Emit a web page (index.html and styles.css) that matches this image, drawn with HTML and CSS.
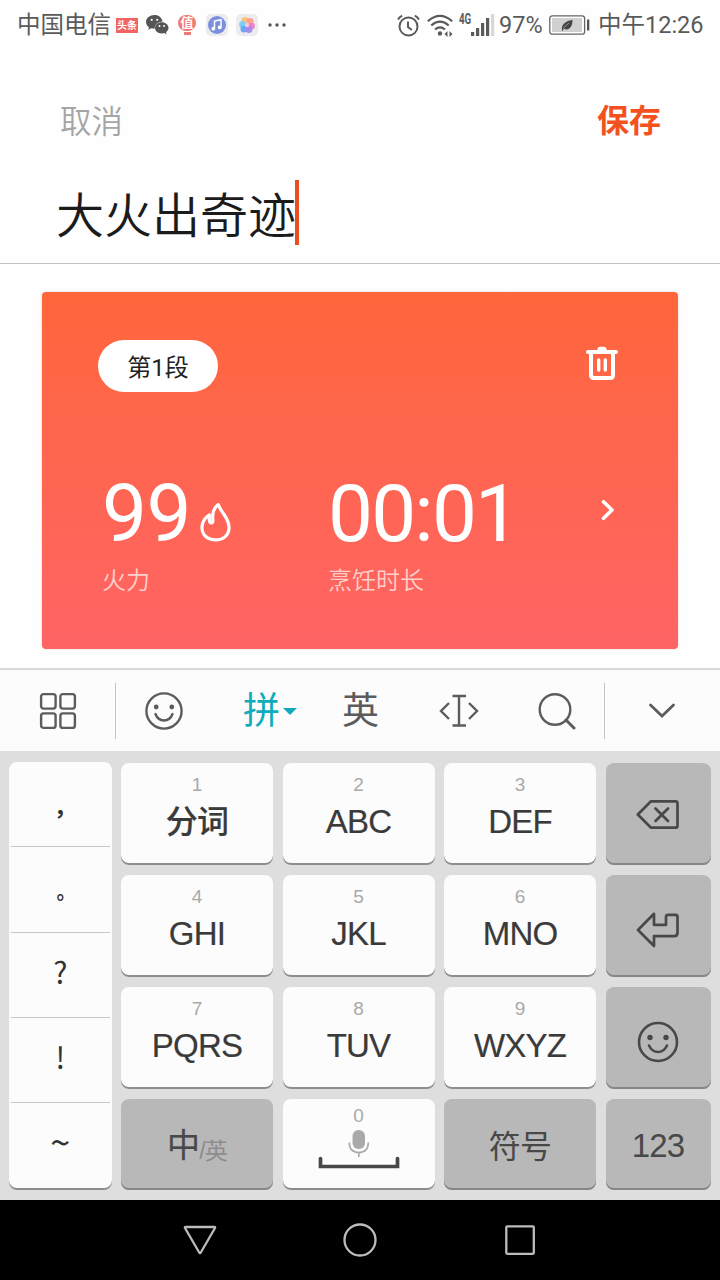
FILE: index.html
```html
<!DOCTYPE html>
<html lang="zh-CN">
  <head>
    <meta charset="utf-8">
    <title>大火出奇迹</title>
    <link rel="stylesheet" href="styles.css">
  </head>
  <body>
    <div class="status-bar">
      <span class="carrier">中国电信</span>
      <span class="toutiao">头条</span>
      <svg class="wechat" width="23" height="20" viewBox="0 0 23 20">
        <path fill="#555" d="M8.500 0C3.800 0 0 3 0 6.900c0 2.200 1.200 4 3 5.300L2.200 14.800l3-1.600c1 .3 2.100.5 3.400.5 0-4.300 3.600-7.200 8-7.200C15.900 2.700 12.600 0 8.500 0z" />
        <path fill="#555" d="M15.700 7.200c-3.900 0-6.700 2.500-6.700 5.600s2.800 5.700 6.700 5.700c.9 0 1.700-.1 2.500-.4l2.500 1.300-.7-2.200c1.500-1.100 2.500-2.600 2.500-4.400 0-3.100-2.900-5.600-6.800-5.600z" />
        <g fill="#fff">
          <circle cx="5.700" cy="4.800" r="1.100" />
          <circle cx="11.200" cy="4.800" r="1.100" />
          <circle cx="13.500" cy="11" r="1" />
          <circle cx="18" cy="11" r="1" />
        </g>
      </svg>
      <span class="smzdm"><b>值</b><i></i></span>
      <span class="app-icon">
        <svg width="18" height="18" viewBox="0 0 18 18">
          <circle cx="9" cy="9" r="9" fill="#7b8fdc" />
          <path d="M6.500 12.500V5l6.500-1.300v7.500" fill="none" stroke="#fff" stroke-width="1.500" />
          <circle cx="5.300" cy="12.700" r="1.900" fill="#fff" />
          <circle cx="11.700" cy="11.400" r="1.900" fill="#fff" />
        </svg>
      </span>
      <span class="app-icon photos">
        <svg width="16" height="16" viewBox="0 0 16 16">
          <circle cx="6" cy="3.800" r="3.700" fill="#ffc07a" />
          <circle cx="11" cy="4.500" r="3.600" fill="#ffa58c" />
          <circle cx="3.600" cy="7.500" r="3.400" fill="#7fcdf5" />
          <circle cx="12.600" cy="9" r="3.300" fill="#f17fc4" />
          <circle cx="5" cy="12" r="3.500" fill="#6aa7f5" />
          <circle cx="10" cy="12.500" r="3.400" fill="#a98af0" />
          <circle cx="8" cy="8" r="2.200" fill="#f4c9d8" />
        </svg>
      </span>
      <svg class="dots" width="18" height="4" viewBox="0 0 18 4">
        <g fill="#555">
          <circle cx="2" cy="2" r="1.700" />
          <circle cx="9" cy="2" r="1.700" />
          <circle cx="16" cy="2" r="1.700" />
        </g>
      </svg>

      <svg class="alarm" width="23" height="23" viewBox="0 0 23 23">
        <g fill="none" stroke="#5a5a5a" stroke-width="2">
          <circle cx="11.500" cy="12.500" r="9" />
          <path d="M11 7.500v5.500l3.800 3" />
          <path d="M1 5.500Q2.500 2.800 5.200 1.600M22 5.500Q20.500 2.800 17.800 1.600" />
        </g>
      </svg>
      <svg class="wifi" width="26" height="23" viewBox="0 0 26 23">
        <g fill="none" stroke="#5a5a5a" stroke-width="2.200">
          <path d="M.8 7.200Q13-3.600 25.200 7.200" />
          <path d="M4.300 11.500Q13 3.900 21.700 11.500" />
          <path d="M8 15.500Q13 11.400 18 15.500" />
        </g>
        <circle cx="13" cy="19.500" r="2.200" fill="#5a5a5a" />
        <path d="M20.500 17v6l-3-3zM22.500 17v6l3-3z" fill="#5a5a5a" />
      </svg>
      <span class="network">4G</span>
      <svg class="signal" width="24" height="22" viewBox="0 0 24 22">
        <g fill="#5a5a5a">
          <rect x="0" y="18" width="3.200" height="4" />
          <rect x="5" y="14" width="3.200" height="8" />
          <rect x="10" y="9" width="3.200" height="13" />
          <rect x="15" y="4" width="3.200" height="18" />
        </g>
        <rect x="20" y="0" width="3.200" height="22" fill="#d8d8d8" />
      </svg>
      <span class="percent">97%</span>
      <svg class="battery" width="41" height="20" viewBox="0 0 41 20">
        <rect x=".8" y=".8" width="34.800" height="18.400" rx="2.500" fill="#fff" stroke="#666" stroke-width="1.300" />
        <rect x="3" y="3" width="30" height="14" fill="#d0d0d0" />
        <path d="M13 15.500c-1-5 2.500-9.500 10.500-10.500.3 7-4 11-8.500 8.800L13.600 16z" fill="#444" />
        <path d="M14 14.500Q16 10.500 20 8" fill="none" stroke="#aaa" stroke-width=".8" />
        <rect x="38" y="4.500" width="2.300" height="11" fill="#555" />
      </svg>
      <span class="clock">中午12:26</span>
    </div>

    <div class="header">
      <span class="cancel">取消</span>
      <span class="save">保存</span>
    </div>
    <div class="name-field">
      <span class="name">大火出奇迹</span>
      <span class="caret"></span>
    </div>

    <div class="content">
      <div class="card">
        <div class="card-top">
          <span class="stage">第1段</span>
          <svg width="34" height="36" viewBox="0 0 34 36">
            <g fill="none" stroke="#fff" stroke-linecap="round">
              <path d="M3 7h28" stroke-width="4" />
              <path d="M14 5.200q0-1.700 1.700-1.700h2.600q1.700 0 1.700 1.700" stroke-width="3.500" />
              <path d="M6 8v22q0 3 3 3h16q3 0 3-3V8" stroke-width="4" />
              <path d="M13.700 15v10M20.300 15v10" stroke-width="3.400" />
            </g>
          </svg>
        </div>
        <div class="card-values">
          <div class="fire">
            <div class="value">
              99
              <svg width="31" height="40" viewBox="0 0 32 41">
                <path d="M18.800 2.500C14.200 6 12.500 11 13.200 17.500q.5 4-1.700 4-2.500 0-1.800-8.500C4.800 16.500 2 21 2 26.300 2 34 8 39 16 39s14-5 14-12.500c0-5.800-2.300-9.500-5-13.500-2.600-3.800-4.800-6.500-6.200-10.500z" fill="none" stroke="#fff" stroke-width="3.300" stroke-linejoin="round" />
              </svg>
            </div>
            <div class="label">火力</div>
          </div>
          <div class="duration">
            <div class="value">00:01</div>
            <div class="label">烹饪时长</div>
          </div>
          <svg class="arrow" width="14" height="22" viewBox="0 0 14 22">
            <path d="M2.500 2.700l8.500 8.300-8.500 8.300" fill="none" stroke="#fff" stroke-width="3.600" stroke-linecap="round" stroke-linejoin="round" />
          </svg>
        </div>
      </div>
    </div>

    <div class="toolbar">
      <div class="tool tool-menu">
        <svg width="38" height="38" viewBox="0 0 38 38">
          <g fill="none" stroke="#5c5c5c" stroke-width="2.400">
            <rect x="2.100" y="2.100" width="14.500" height="14.500" rx="2.500" />
            <rect x="21.400" y="2.100" width="14.500" height="14.500" rx="2.500" />
            <rect x="2.100" y="21.400" width="14.500" height="14.500" rx="2.500" />
            <rect x="21.400" y="21.400" width="14.500" height="14.500" rx="2.500" />
          </g>
        </svg>
      </div>
      <div class="tool tool-middle">
        <svg width="38" height="38" viewBox="0 0 38 38">
          <circle cx="19" cy="19" r="17.600" fill="none" stroke="#5c5c5c" stroke-width="2.400" />
          <circle cx="11.200" cy="15" r="2.400" fill="#5c5c5c" />
          <circle cx="26.800" cy="15" r="2.400" fill="#5c5c5c" />
          <path d="M10.500 22q2.500 6.500 8.500 6.500t8.500-6.500" fill="none" stroke="#5c5c5c" stroke-width="2.400" stroke-linecap="round" />
        </svg>
        <span class="pinyin">拼<i></i></span>
        <span class="english">英</span>
        <svg class="cursor" width="40" height="34" viewBox="0 0 40 34">
          <g fill="none" stroke="#5c5c5c" stroke-width="2.400">
            <path d="M13.500 2h13.500M13.500 31.500h13.500M20 2v29.500" />
            <path d="M10 9l-8 8 8 8M30 9l8 8-8 8" />
          </g>
        </svg>
        <svg class="search" width="38" height="38" viewBox="0 0 38 38">
          <circle cx="17" cy="17.500" r="15.300" fill="none" stroke="#5c5c5c" stroke-width="2.400" />
          <path d="M28 28l8 8" stroke="#5c5c5c" stroke-width="3" stroke-linecap="round" />
        </svg>
      </div>
      <div class="tool tool-hide">
        <svg width="28" height="18" viewBox="0 0 28 18">
          <path d="M2.500 3l11.500 11 11.500-11" fill="none" stroke="#5c5c5c" stroke-width="2.800" stroke-linecap="round" />
        </svg>
      </div>
    </div>

    <div class="keyboard">
      <div class="punctuation" lang="zh-TW">
        <span class="comma">，</span>
        <span class="stop">。</span>
        <span>?</span>
        <span>!</span>
        <span class="tilde">~</span>
      </div>
      <div class="key"><small>1</small><b>分词</b></div>
      <div class="key"><small>2</small>ABC</div>
      <div class="key"><small>3</small>DEF</div>
      <div class="key dark">
        <svg width="44" height="32" viewBox="0 0 44 32">
          <g fill="none" stroke="#484848" stroke-width="2.700" stroke-linejoin="round" stroke-linecap="round">
            <path d="M15 2.300h24.500q2 0 2 2v22.400q0 2-2 2H15L1.800 15.500z" />
            <path d="M19.500 9.500l12.500 12.500M32 9.500L19.500 22" />
          </g>
        </svg>
      </div>
      <div class="key"><small>4</small>GHI</div>
      <div class="key"><small>5</small>JKL</div>
      <div class="key"><small>6</small>MNO</div>
      <div class="key dark enter">
        <svg width="44" height="36" viewBox="0 0 44 36">
          <path d="M18 1.800L2 18l16 16v-9.800h20q3.500 0 3.500-3.500V4.800q0-2-2-2H32q-2 0-2 2v8H18z" fill="none" stroke="#484848" stroke-width="2.700" stroke-linejoin="round" />
        </svg>
      </div>
      <div class="key"><small>7</small>PQRS</div>
      <div class="key"><small>8</small>TUV</div>
      <div class="key"><small>9</small>WXYZ</div>
      <div class="key dark smile">
        <svg width="42" height="42" viewBox="0 0 42 42">
          <circle cx="21" cy="21" r="19" fill="none" stroke="#484848" stroke-width="2.600" />
          <circle cx="13" cy="16.500" r="2.700" fill="#484848" />
          <circle cx="29" cy="16.500" r="2.700" fill="#484848" />
          <path d="M12 24.500q3 6.500 9 6.500t9-6.500" fill="none" stroke="#484848" stroke-width="2.600" stroke-linecap="round" />
        </svg>
      </div>
      <div class="key dark language"><span>中</span><em>/英</em></div>
      <div class="key space">
        <small>0</small>
        <svg width="82" height="42" viewBox="0 0 82 42">
          <rect x="34.500" y="0" width="12.500" height="19" rx="6" fill="#a9a9a9" />
          <path d="M31.300 12.500q0 10 9.500 10t9.500-10M40.800 22.500V27" fill="none" stroke="#a9a9a9" stroke-width="1.600" />
          <path d="M2.500 28.500v8h77v-8" fill="none" stroke="#484848" stroke-width="3.700" stroke-linecap="round" />
        </svg>
      </div>
      <div class="key dark symbols">符号</div>
      <div class="key dark numbers">123</div>
    </div>

    <div class="nav-bar">
      <svg width="36" height="36" viewBox="0 0 36 36">
        <path d="M3.500 5h29q1 0 .5 1L18.800 30.500q-.8 1.200-1.600 0L3 6q-.5-1 .5-1z" fill="none" stroke="#bcbcbc" stroke-width="2.300" />
      </svg>
      <svg width="36" height="36" viewBox="0 0 36 36">
        <circle cx="18" cy="18" r="15.500" fill="none" stroke="#bcbcbc" stroke-width="2.300" />
      </svg>
      <svg width="36" height="36" viewBox="0 0 36 36">
        <rect x="4.300" y="4.300" width="27.500" height="27.500" rx="1" fill="none" stroke="#bcbcbc" stroke-width="2.300" />
      </svg>
    </div>
  </body>
</html>
```

FILE: styles.css
```css
* {
  box-sizing: border-box;
}

body {
  width: 720px;
  height: 1280px;
  margin: 0;
  background-color: #fefefe;
  font-family: Roboto, "Noto Sans CJK SC", sans-serif;
  display: flex;
  flex-direction: column;
  overflow: hidden;
}

svg {
  display: block;
  flex: none;
}

/* Status bar */
.status-bar {
  height: 50px;
  padding: 0 15px 0 17px;
  display: flex;
  align-items: center;
  color: #5a5a5a;
  font-size: 23.5px;
  line-height: 52px;
  white-space: nowrap;
}

.carrier {
  width: 99px;
}

.toutiao {
  width: 22px;
  height: 15px;
  margin-right: 8px;
  background-color: #f26464;
  color: #fff;
  font-size: 10px;
  font-weight: bold;
  line-height: 15px;
  text-align: center;
}

.smzdm {
  width: 18px;
  height: 20px;
  margin: 0 10px 0 9px;
  color: #fff;
  font-size: 13px;
  line-height: 16px;
  text-align: center;
}

.smzdm b {
  display: block;
  height: 16px;
  border-radius: 8px;
  background-color: #ee7b75;
}

.smzdm i {
  display: block;
  width: 7px;
  height: 3px;
  margin: 1px auto 0;
  background-color: #ee7b75;
}

.app-icon {
  width: 22px;
  height: 22px;
  margin-right: 8px;
  border-radius: 5px;
  background-color: #ececee;
  display: flex;
  align-items: center;
  justify-content: center;
}

.photos {
  margin-right: 10px;
}

.alarm {
  margin-left: auto;
  margin-right: 7px;
}

.wifi {
  margin-right: 6px;
}

.network {
  width: 12px;
  height: 28px;
  font-size: 14px;
  font-weight: bold;
  line-height: 16px;
  transform: scaleX(0.7);
  transform-origin: left;
}

.signal {
  margin-right: 4px;
}

.percent {
  width: 50px;
}

.battery {
  margin-right: 8px;
}

.clock {
  width: 107px;
}

/* Recipe name */
.header {
  height: 130px;
  padding: 48px 59px 0 60px;
  display: flex;
  justify-content: space-between;
  font-size: 32px;
  line-height: 46px;
}

.cancel {
  padding-top: 2px;
  color: #a5a5a5;
  font-size: 31.5px;
  font-weight: 350;
}

.save {
  color: #f4511e;
  font-weight: bold;
}

.name-field {
  height: 84px;
  padding-left: 56px;
  border-bottom: 1px solid #c2c2c2;
  display: flex;
}

.name {
  width: 239px;
  color: #1b1b1b;
  font-size: 48px;
  font-weight: 350;
  line-height: 73px;
  white-space: nowrap;
}

.caret {
  width: 4px;
  height: 65px;
  background-color: #ea4e20;
}

/* Cooking stage card */
.content {
  height: 404px;
  padding: 28px 42px 0;
}

.card {
  height: 357px;
  padding: 48px 60px 0 56px;
  border-radius: 4px;
  background-image: linear-gradient(#ff663c, #ff6465);
  box-shadow: 0 0 3px rgba(0, 0, 0, 0.15);
  color: #fff;
}

.card-top {
  height: 136px;
  display: flex;
  justify-content: space-between;
}

.card-top svg {
  margin-top: 5px;
  margin-right: -1px;
}

.stage {
  width: 120px;
  height: 52px;
  border-radius: 26px;
  background-color: #fff;
  color: #222;
  font-size: 24px;
  line-height: 56px;
  text-align: center;
}

.card-values {
  display: flex;
}

.fire {
  width: 226px;
  padding-left: 4px;
}

.value {
  height: 89px;
  display: flex;
  font-size: 80px;
  letter-spacing: -0.5px;
  line-height: 76px;
}

.duration .value {
  letter-spacing: -1.8px;
}

.fire svg {
  margin: 26px 0 0 9px;
}

.label {
  color: #ffd0cb;
  font-size: 24px;
  font-weight: 350;
  line-height: 33px;
}

.duration {
  width: 276px;
  padding-left: 4px;
}

.arrow {
  margin-top: 23px;
  margin-left: 1px;
}

/* Keyboard toolbar */
.toolbar {
  height: 83px;
  border-top: 2px solid #d9d9d9;
  background-color: #fcfcfc;
  display: flex;
  align-items: center;
}

.tool {
  height: 56px;
  display: flex;
  align-items: center;
}

.tool-menu {
  width: 116px;
  padding-left: 39px;
  border-right: 1px solid #c4c4c4;
}

.tool-middle {
  width: 489px;
  padding-left: 29px;
  border-right: 1px solid #c4c4c4;
}

.tool-hide {
  padding-left: 43px;
}

.pinyin,
.english {
  color: #5c5c5c;
  font-size: 37px;
  line-height: 56px;
  padding-top: 2px;
}

.pinyin {
  width: 53px;
  margin-left: 60px;
  color: #10abbd;
  display: flex;
  align-items: center;
}

.pinyin i {
  margin-left: 3px;
  border: 7px solid transparent;
  border-top: 7px solid #10abbd;
  border-bottom: 0;
}

.english {
  width: 37px;
  margin-left: 46px;
}

.cursor {
  margin-left: 60px;
}

.search {
  margin-left: 59px;
}

/* Keyboard */
.keyboard {
  height: 449px;
  padding: 12px 9px 10px;
  background-color: #dedede;
  display: grid;
  grid-template-columns: 102.5px 152px 152px 152px 105px;
  grid-template-rows: 102px 102px 102px 91px;
  gap: 10px 9.5px;
}

.punctuation {
  grid-row: span 4;
  height: 428px;
  margin-top: -1px;
  padding: 0 2px;
  border-radius: 8px;
  background-color: #fcfcfc;
  box-shadow: inset 0 -2px #8d8d8d;
  color: #333;
  font-family: "Noto Sans CJK TC", sans-serif;
  font-size: 30px;
  text-align: center;
}

.punctuation span {
  display: block;
  height: 85.3px;
  border-bottom: 1px solid #c8c8c8;
  line-height: 77px;
}

.punctuation span:last-child {
  border-bottom: none;
}

.punctuation .comma {
  font-size: 23px;
  font-weight: bold;
  line-height: 101px;
}

.punctuation .stop {
  font-size: 19px;
  font-weight: bold;
  line-height: 100px;
}

.punctuation .tilde {
  font-size: 36px;
  line-height: 75px;
}

.key {
  border-radius: 8px;
  background-color: #fcfcfc;
  box-shadow: inset 0 -2px #8d8d8d;
  color: #3a3a3a;
  font-family: "Liberation Sans", "Noto Sans CJK SC", sans-serif;
  font-size: 33px;
  letter-spacing: -0.8px;
  line-height: 48px;
  text-align: center;
  -webkit-text-stroke: 0.2px;
}

.key small {
  display: block;
  height: 35px;
  color: #a9a9a9;
  font-size: 19px;
  letter-spacing: 0;
  line-height: 43px;
  -webkit-text-stroke: 0;
}

.key b {
  font-size: 32px;
  font-weight: 500;
}

.dark {
  background-color: #b8b8b8;
  box-shadow: inset 0 -2px #868686;
  color: #484848;
  display: flex;
  align-items: center;
  justify-content: center;
}

.dark svg {
  margin-top: 2px;
}

.enter svg,
.smile svg {
  margin-top: 8px;
}

.language {
  padding-top: 2px;
}

.language em {
  padding-top: 10px;
  color: #8c8c8c;
  font-size: 23px;
  font-style: normal;
  -webkit-text-stroke: 0;
}

.space small {
  height: 31px;
  line-height: 33px;
}

.space svg {
  margin: 0 auto;
}

.symbols {
  padding-top: 4px;
  font-size: 32px;
  -webkit-text-stroke: 0;
}

.numbers {
  padding-top: 3px;
  -webkit-text-stroke: 0;
}

/* Navigation */
.nav-bar {
  height: 80px;
  background-color: #000;
  display: flex;
  align-items: center;
  justify-content: center;
  gap: 124px;
}
```
